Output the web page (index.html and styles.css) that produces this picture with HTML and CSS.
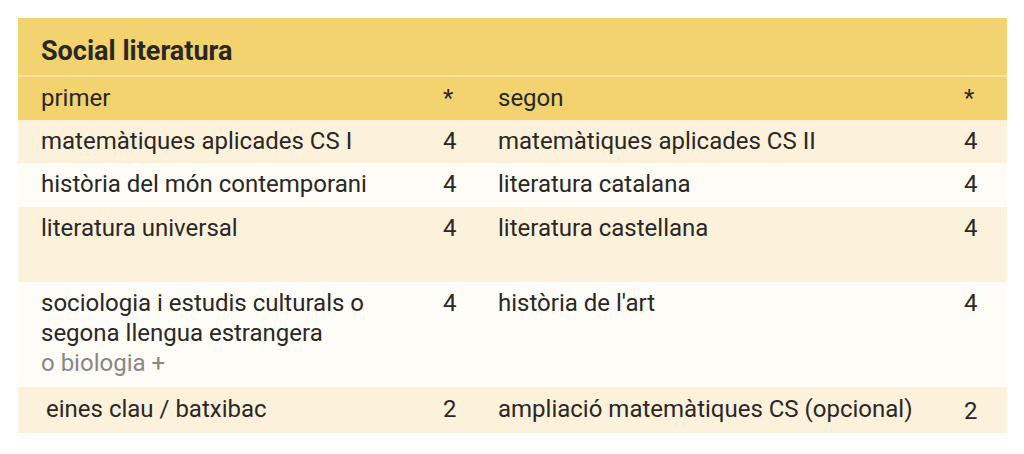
FILE: index.html
```html
<!DOCTYPE html>
<html lang="ca">
<head>
<meta charset="utf-8">
<title>Social literatura</title>
<link rel="stylesheet" href="styles.css">
</head>
<body>
<table class="plan">
  <colgroup>
    <col class="c-name1">
    <col class="c-num1">
    <col class="c-name2">
    <col class="c-num2">
  </colgroup>
  <thead>
    <tr class="title-row"><th colspan="4">Social literatura</th></tr>
    <tr class="head-row">
      <th class="name1">primer</th><th class="num1">*</th>
      <th class="name2">segon</th><th class="num2">*</th>
    </tr>
  </thead>
  <tbody>
    <tr class="odd">
      <td class="name1">matemàtiques aplicades CS I</td><td class="num1">4</td>
      <td class="name2">matemàtiques aplicades CS II</td><td class="num2">4</td>
    </tr>
    <tr class="even r2">
      <td class="name1">història del món contemporani</td><td class="num1">4</td>
      <td class="name2">literatura catalana</td><td class="num2">4</td>
    </tr>
    <tr class="odd tall">
      <td class="name1">literatura universal</td><td class="num1">4</td>
      <td class="name2">literatura castellana</td><td class="num2">4</td>
    </tr>
    <tr class="even r4">
      <td class="name1">sociologia i estudis culturals o<br>segona llengua estrangera<span class="extra">o biologia +</span></td><td class="num1">4</td>
      <td class="name2">història de l'art</td><td class="num2">4</td>
    </tr>
    <tr class="odd last">
      <td class="name1 indent">eines clau / batxibac</td><td class="num1">2</td>
      <td class="name2">ampliació matemàtiques CS (opcional)</td><td class="num2 low">2</td>
    </tr>
  </tbody>
</table>
</body>
</html>
```

FILE: styles.css
```css
html, body {
  margin: 0;
  padding: 0;
  background: #ffffff;
}

body {
  padding: 18px 17px 0 18px;
  font-family: Roboto, "Liberation Sans", sans-serif;
  color: #2a2725;
}

.plan {
  width: 989px;
  border-collapse: separate;
  border-spacing: 0;
  table-layout: fixed;
  font-size: 24px;
  line-height: 30px;
}

.c-name1 { width: 407px; }
.c-num1 { width: 55px; }
.c-name2 { width: 460px; }
.c-num2 { width: 67px; }

.plan th,
.plan td {
  padding: 6px 0 7px 0;
  text-align: left;
  vertical-align: top;
  font-weight: 400;
}

.plan .name1 { padding-left: 23px; }
.plan .num1 { padding-left: 18px; }
.plan .name2 { padding-left: 18px; }
.plan .num2 { padding-left: 24px; }

.plan .title-row th {
  background: #f2d36f;
  font-weight: 700;
  font-size: 27px;
  padding: 18px 0 9px 23px;
  border-bottom: 2px solid #f7e4a2;
}

.head-row th {
  background: #f2d36f;
}

.odd td { background: #fcf2dc; }
.even td { background: #fefcf6; }

.plan .r2 td { padding-bottom: 8px; }
.plan .tall td { padding-bottom: 39px; }
.plan .r4 td { padding-bottom: 9px; }

.plan .last td { padding-top: 7px; padding-bottom: 9px; }
.plan .last td.low { padding-top: 9px; padding-bottom: 7px; }

.indent { text-indent: 5px; }

.extra {
  display: block;
  color: #8a8784;
}
```
